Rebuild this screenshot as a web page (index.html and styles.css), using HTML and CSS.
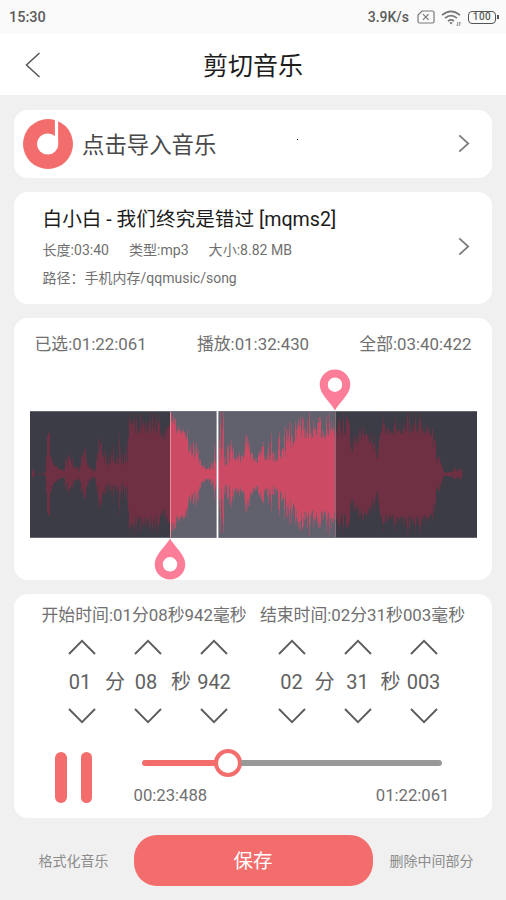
FILE: index.html
```html
<!DOCTYPE html>
<html lang="zh-CN">
<head>
<meta charset="utf-8">
<title>剪切音乐</title>
<link rel="stylesheet" href="styles.css">
</head>
<body>
<svg class="defs" width="0" height="0">
  <symbol id="right" viewBox="0 0 12 20"><path d="M1 1.500 10.500 10 1 18.500" fill="none" stroke="#7b7b7b" stroke-width="1.800"/></symbol>
  <symbol id="up" viewBox="0 0 28 16"><path d="M1 15 14 1.800 27 15" fill="none" stroke="#5d5d5d" stroke-width="1.900"/></symbol>
  <symbol id="down" viewBox="0 0 28 16"><path d="M1 1 14 14.200 27 1" fill="none" stroke="#5d5d5d" stroke-width="1.900"/></symbol>
  <symbol id="pin" viewBox="0 0 32 42"><path fill="#fb7d98" fill-rule="evenodd" d="M16 41.500C12.500 34.500.7 25.500.7 15.800A15.300 15.300 0 0 1 31.300 15.800C31.300 25.500 19.500 34.500 16 41.500ZM16 8.500a7.200 7.200 0 1 0 0 14.400a7.200 7.200 0 1 0 0-14.400Z"/></symbol>
</svg>
<div class="status">
  <span>15:30</span>
  <div class="status-right">
    <span class="speed">3.9K/s</span>
    <svg class="sim" width="18" height="14" viewBox="0 0 18 14" fill="none" stroke="#777" stroke-width="1.200"><path d="M5 1h10.500q1.500 0 1.500 1.500v9q0 1.500-1.500 1.500h-13q-1.500 0-1.500-1.500V5z"/><path d="m6 4.200 5.600 5.600m0-5.600L6 9.800"/></svg>
    <svg class="wifi" width="21" height="17" viewBox="0 0 21 17" fill="none" stroke="#777" stroke-width="1.700"><path d="M1 5.200Q10 -2.600 19 5.200M4 8.200Q10 3 16 8.200M7 11.200Q10 8.700 13 11.200"/><path d="m8.300 12.600 1.700 2 1.700-2q-1.700-1.100-3.400 0z" fill="#777" stroke="none"/><path d="M16.700 12v4m2-4v4m-3-1.300 1 1.300m2-4 1 1.300" stroke-width=".8"/></svg>
    <span class="battery">100</span>
  </div>
</div>
<header class="header">
  <svg class="back" width="16" height="26" viewBox="0 0 16 26"><path d="M14.500 1 1.500 13 14.500 25" fill="none" stroke="#555" stroke-width="1.500"/></svg>
  <h1>剪切音乐</h1>
</header>
<main>
  <section class="card import">
    <svg width="50" height="50" viewBox="0 0 50 50"><circle cx="25" cy="25" r="25" fill="#f36d6d"/><circle cx="24.700" cy="25" r="10.600" fill="#fff"/><path d="M31.900 0V20L35.100 25.500V0Z" fill="#fff"/></svg>
    <span class="import-text">点击导入音乐</span>
    <svg class="arrow" width="12" height="19"><use href="#right"/></svg>
    <i class="dot"></i>
  </section>
  <section class="card song">
    <div>
      <h2>白小白 - 我们终究是错过 [mqms2]</h2>
      <div class="meta"><span>长度:03:40</span><span>类型:mp3</span><span>大小:8.82 MB</span></div>
      <div class="path">路径：手机内存/qqmusic/song</div>
    </div>
    <svg class="arrow" width="12" height="19"><use href="#right"/></svg>
  </section>
  <section class="card wave">
    <div class="times"><span>已选:01:22:061</span><span>播放:01:32:430</span><span>全部:03:40:422</span></div>
    <div class="track">
      <svg id="wave" width="447" height="127" viewBox="0 0 447 127">
        <rect width="447" height="127" fill="#3b3c45"/>
        <rect x="140.500" width="165" height="127" fill="#60616d"/>
        <g id="bars"></g>
        <path d="M140.500 0V127" stroke="#e88b98"/>
        <path d="M305.500 0V127" stroke="#8b6b76"/>
        <path d="M0 .5H447M0 126.500H447" stroke="#777982" stroke-width=".7"/>
        <path d="M187.500 0V127" stroke="#fff" stroke-width="1.800"/>
      </svg>
      <svg class="pin pin-end" width="32" height="42"><use href="#pin"/></svg>
      <svg class="pin pin-start" width="32" height="42"><use href="#pin"/></svg>
    </div>
  </section>
  <section class="card edit">
    <div class="labels"><span>开始时间:01分08秒942毫秒</span><span>结束时间:02分31秒003毫秒</span></div>
    <div class="steppers">
      <div class="stepper first">
        <svg><use href="#up"/></svg><i></i><svg><use href="#up"/></svg><i></i><svg><use href="#up"/></svg>
        <b class="short">01</b><b>分</b><b class="short">08</b><b>秒</b><b>942</b>
        <svg><use href="#down"/></svg><i></i><svg><use href="#down"/></svg><i></i><svg><use href="#down"/></svg>
      </div>
      <div class="stepper">
        <svg><use href="#up"/></svg><i></i><svg><use href="#up"/></svg><i></i><svg><use href="#up"/></svg>
        <b>02</b><b>分</b><b>31</b><b>秒</b><b>003</b>
        <svg><use href="#down"/></svg><i></i><svg><use href="#down"/></svg><i></i><svg><use href="#down"/></svg>
      </div>
    </div>
    <div class="player">
      <div class="pause"><i></i><i></i></div>
      <div class="progress">
        <div class="bar"><i class="played"></i><i class="knob"></i><i class="rest"></i></div>
        <div class="pos"><span>00:23:488</span><span>01:22:061</span></div>
      </div>
    </div>
  </section>
</main>
<footer>
  <span class="side left">格式化音乐</span>
  <button>保存</button>
  <span class="side">删除中间部分</span>
</footer>
<script src="wave.js"></script>
</body>
</html>
```
FILE: styles.css
```css
* { box-sizing: border-box; }
body { margin: 0; width: 506px; height: 900px; overflow: hidden; background: #f0f0f0; font-family: Roboto, "Noto Sans CJK SC", sans-serif; color: #707070; }
h1, h2 { margin: 0; font-weight: 400; }
svg { display: block; flex: none; }
span { white-space: nowrap; }
.defs { position: absolute; }
.status { height: 34px; padding: 0 8px 0 9px; background: #fafafa; display: flex; align-items: center; justify-content: space-between; font-size: 14.500px; font-weight: 500; color: #5c5c5c; }
.status-right { display: flex; align-items: center; }
.speed { font-size: 14px; }
.sim { margin-left: 7.500px; }
.wifi { margin-left: 6.500px; margin-top: 2px; }
.battery { position: relative; width: 28px; height: 13px; margin: 0 2px 0 6px; border: 1.500px solid #555; border-radius: 4px; font-size: 10px; line-height: 10.500px; text-align: center; letter-spacing: .4px; }
.battery::after { content: ""; position: absolute; right: -4px; top: 3px; width: 2px; height: 4px; background: #555; }
.header { height: 61px; background: #fff; display: grid; grid-template-columns: 41px 1fr 41px; align-items: center; }
.back { justify-self: end; }
.header h1 { padding-top: 4px; font-size: 25px; line-height: 36px; text-align: center; color: #1c1c1c; }
main { padding: 15px 14px 0; display: flex; flex-direction: column; gap: 14px; }
.card { background: #fff; border-radius: 14px; }
.import { position: relative; height: 67.500px; padding: 0 22px 0 9px; display: flex; align-items: center; }
.import-text { margin-left: 9px; padding-top: 2px; font-size: 22.400px; line-height: 32px; color: #484848; }
.arrow { margin-left: auto; }
.dot { position: absolute; left: 283px; top: 29px; width: 1px; height: 1px; background: #111; }
.song { height: 112px; padding: 0 22px 3px 28.500px; display: flex; align-items: center; }
.song h2 { padding-top: 4px; font-size: 19.650px; line-height: 30px; color: #1c1c1c; }
.meta { margin-top: 1px; display: flex; gap: 20px; font-size: 14.050px; line-height: 28px; }
.path { font-size: 14px; line-height: 28px; }
.wave { height: 262px; padding: 13px 15.500px 0; }
.times { display: flex; justify-content: space-between; padding: 0 5px; font-size: 16.850px; line-height: 26px; }
.track { position: relative; margin-top: 54px; }
.pin { position: absolute; }
.pin-end { left: 289.500px; top: -41.500px; }
.pin-start { left: 124.500px; top: 127px; transform: rotate(180deg); }
.edit { height: 224.500px; padding: 8px 27px 0 27.500px; }
.labels { display: flex; justify-content: space-between; font-size: 16.850px; line-height: 26px; }
.steppers { display: flex; gap: 44.500px; padding: 9px 0 0 24px; }
.stepper { display: grid; grid-template: 20px 49px 20px / repeat(5, 33px); align-items: center; justify-items: center; }
.stepper svg { width: 28px; height: 16px; }
.stepper b { padding-top: 2px; font-size: 20px; font-weight: 400; line-height: 30px; color: #616161; white-space: nowrap; }
.stepper .short { margin-right: 4px; }
.player { display: flex; margin-top: 20.500px; }
.pause { display: flex; gap: 14px; padding: 6px 0 0 13.500px; }
.pause i { width: 11.500px; height: 51px; border-radius: 6px; background: #f36d6d; }
.progress { margin-left: 41.500px; width: 316px; }
.bar { height: 30px; margin: 2px 8px 0 8px; display: flex; align-items: center; }
.played { width: 73px; height: 6px; border-radius: 3px 0 0 3px; background: #f36d6d; }
.knob { width: 28px; height: 28px; margin: 0 -1px; border: 4px solid #f36d6d; border-radius: 50%; }
.rest { flex: 1; height: 6px; border-radius: 0 3px 3px 0; background: #999; }
.pos { display: flex; justify-content: space-between; font-size: 16.700px; line-height: 26px; margin-top: 5px; }
footer { display: flex; align-items: center; padding: 17px 32px 0 38.500px; }
.side { font-size: 14px; color: #8b8b8b; line-height: 20px; }
.left { width: 95px; }
footer button { width: 239px; height: 51px; margin-right: 17px; padding: 3px 0 0; border: 0; border-radius: 23px; background: #f36d6d; color: #fff; font: 19.500px/28px Roboto, "Noto Sans CJK SC", sans-serif; }
```
FILE: wave.js
```js
// Envelope points: [x, solid amplitude, peak amplitude]
const env = [
  [0,0,0],[2,0,1],[3,1,9],[4,0,1],[15,0,1],[16,4,8],[17,30,36],[18,42,45],[19.5,40,43],[20.5,16,30],[23,9,12],[28,5,6],[34,3,4],[36,5,20],[39,9,28],[43,6,18],[48,2,6],[50,3,10],
  [52,8,25],[54,20,36],[55,18,33],[57,10,20],[60,4,10],[63,1,3],[66,3,12],[68,10,36],[70,18,42],[74,10,28],[78,7,25],[82,4,18],[86,10,36],[90,10,36],[93,8,25],[98,12,32],[99,44,56],[106,38,55],[115,41,60],
  [126,40,58],[134,34,50],[140,36,58],[147,40,54],[155,40,52],[157,24,38],[163,16,36],[168,12,38],[171,8,14],[176,4,6],[180,4,7],[184,5,26],[188,4,15],[191,14,60],[193,12,62],[196,6,50],[198,5,25],
  [201,16,38],[205,12,25],[212,11,18],[217,18,40],[222,13,22],[227,10,18],[232,20,36],[236,11,22],[241,12,40],[244,11,20],[248,14,38],[257,17,42],[262,24,50],[265,34,52],[274,36,57],
  [285,36,60],[295,34,52],[303,38,60],[307,36,60],[318,40,58],[322,20,42],[327,30,48],[337,40,48],[342,20,40],[348,14,35],[350,40,57],[365,39,57],[387,41,58],[402,38,49],[404,22,45],
  [407,10,24],[411,9,12],[414,1,2],[417,1,4],[419,2,6],[421,1,3],[424,2,6],[427,2,5],[431,2,6],[433,0,0],[447,0,0]
];
let seed = 17;
const random = () => (seed = (seed * 16807) % 2147483647) / 2147483647;
const at = x => {
  const i = Math.max(1, env.findIndex(p => p[0] >= x));
  const a = env[i - 1], b = env[i], t = (x - a[0]) / (b[0] - a[0]);
  return [a[1] + (b[1] - a[1]) * t, a[2] + (b[2] - a[2]) * t];
};
const layers = { dark: '', darkSoft: '', lit: '', litSoft: '' };
for (let x = 0; x < 434; x++) {
  const [solid, peak] = at(x + 0.5);
  if (peak < 0.5) continue;
  const lit = x >= 140 && x < 306;
  const k = Math.pow(random(), 2.1);
  const top = solid + (peak - solid) * k;
  const bottom = solid + (peak - solid) * Math.min(1, k * 0.8 + random() * 0.15);
  const soft = (peak - solid) * 0.5 * random();
  layers[lit ? 'lit' : 'dark'] += `M${x} ${63 - top}h1V${63 + bottom}h-1z`;
  layers[lit ? 'litSoft' : 'darkSoft'] += `M${x} ${63 - Math.min(62, top + soft)}h1V${63 + Math.min(62, bottom + soft)}h-1z`;
}
document.getElementById('bars').innerHTML =
  `<path d="${layers.darkSoft}" fill="#503642"/><path d="${layers.dark}" fill="#6e3042"/>` +
  `<path d="${layers.litSoft}" fill="#97566a"/><path d="${layers.lit}" fill="#cc4a64"/>`;
```
